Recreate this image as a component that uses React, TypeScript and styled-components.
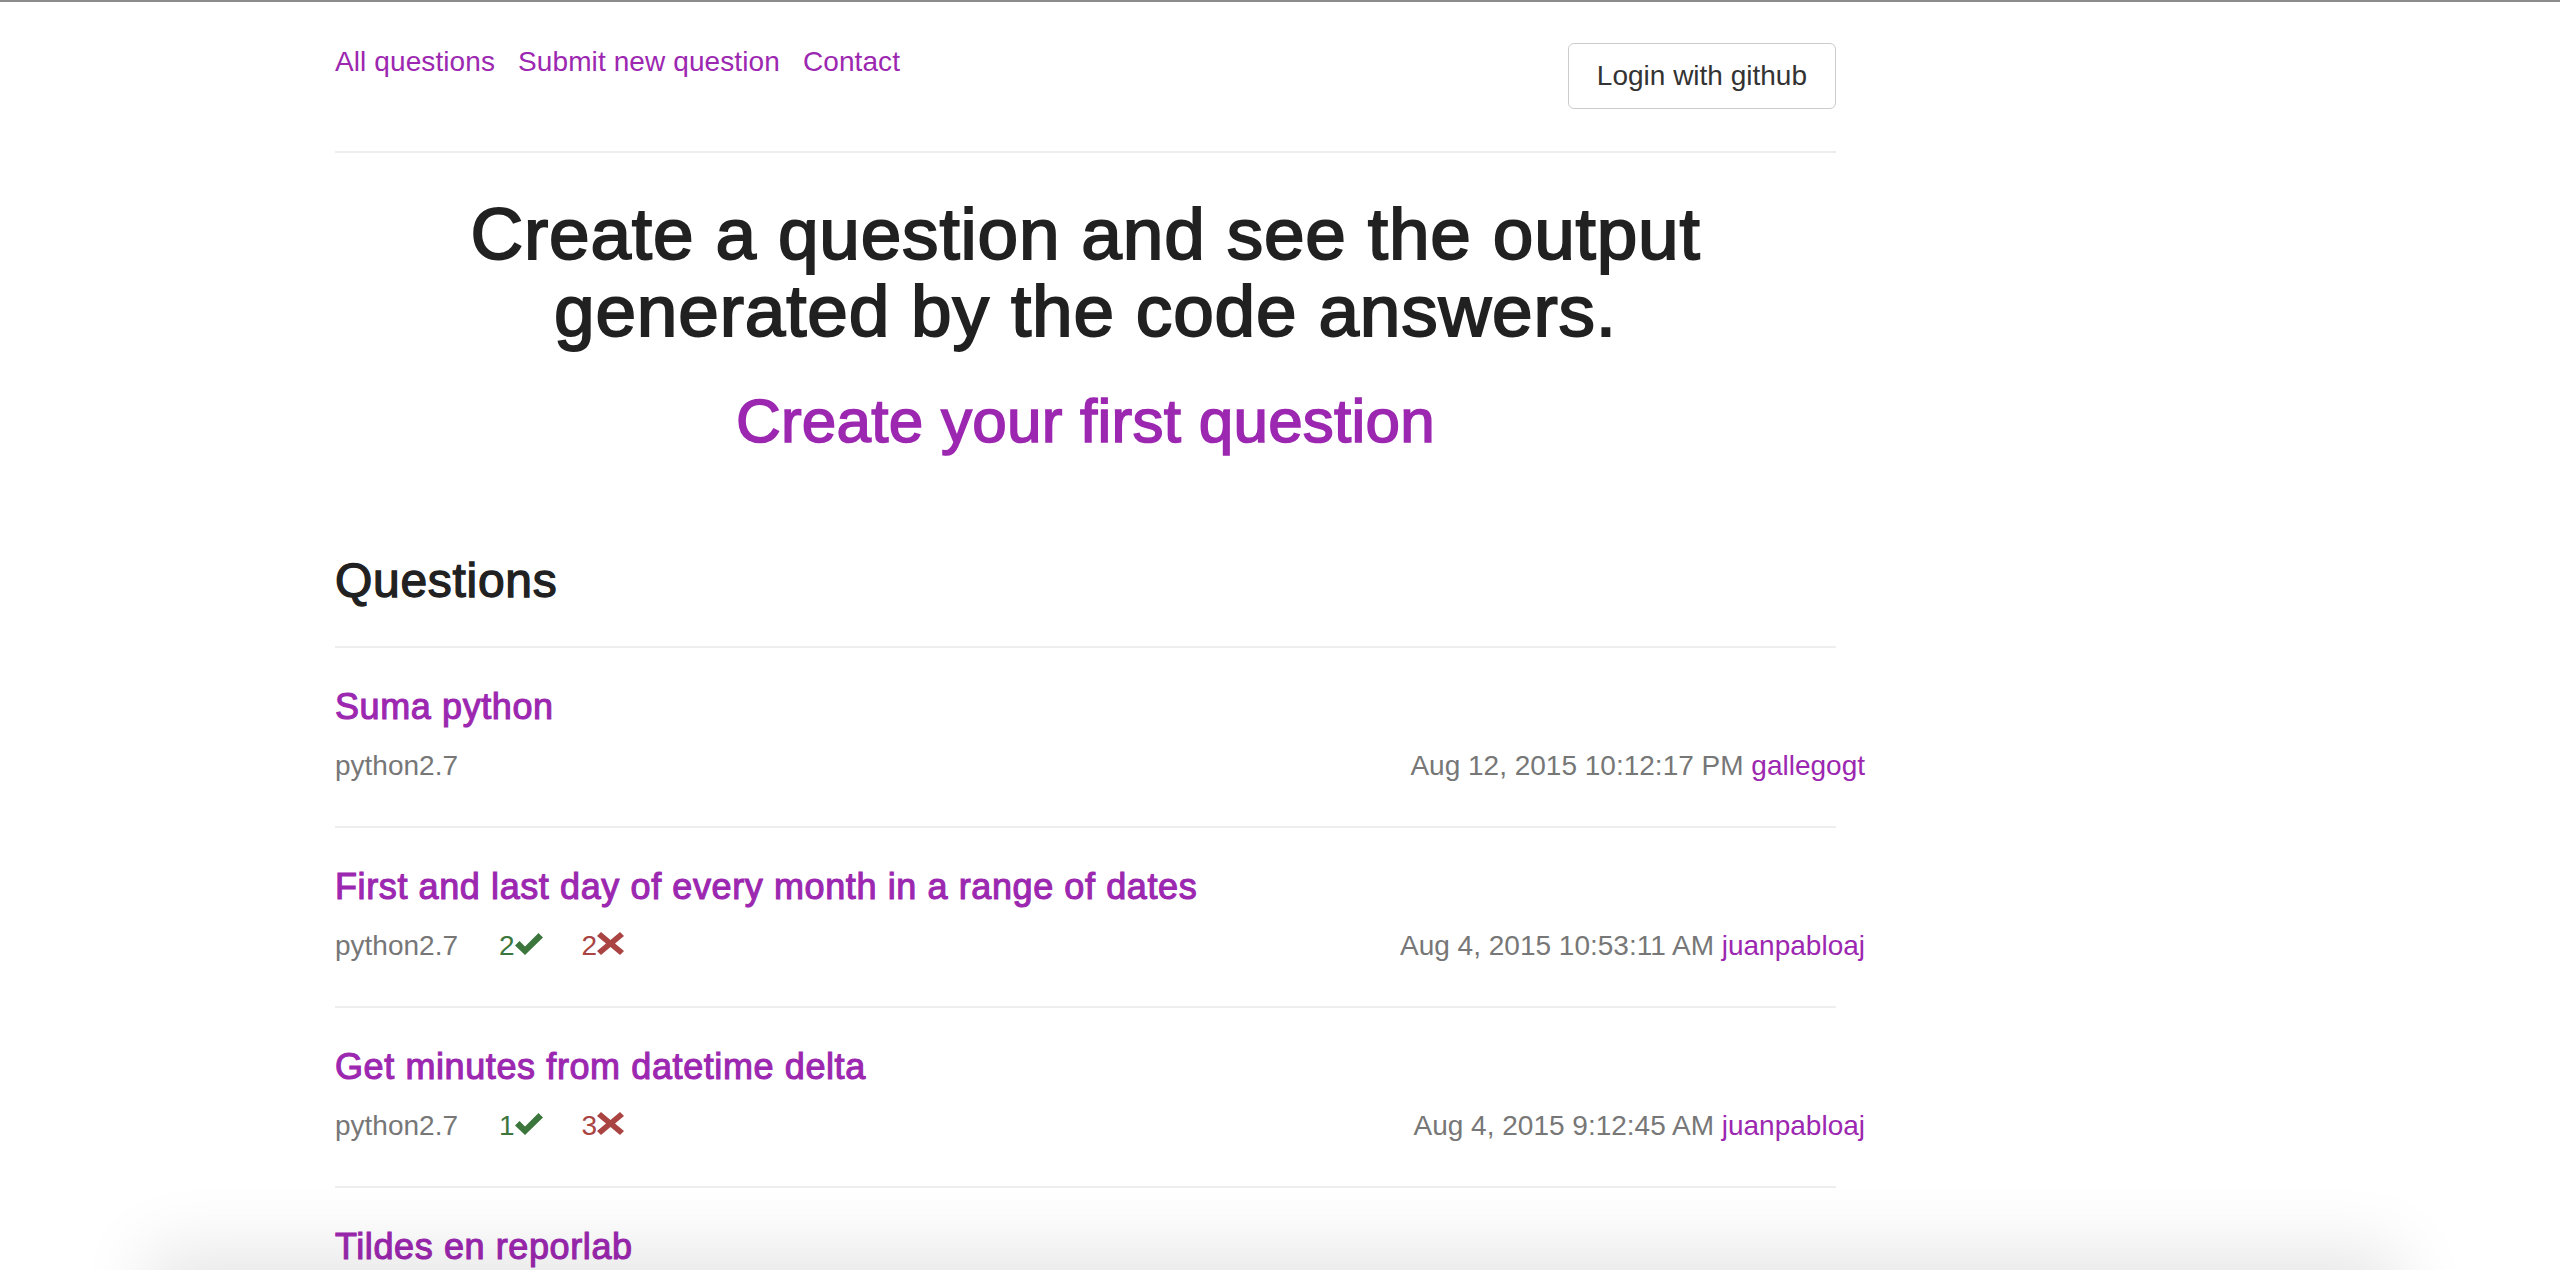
import React from "react";
import styled, { createGlobalStyle } from "styled-components";

const GlobalStyle = createGlobalStyle`
  html, body { margin: 0; padding: 0; background: #fff; }
  body {
    font-family: "Liberation Sans", Arial, Helvetica, sans-serif;
    color: #212121;
    border-top: 2px solid #8c8c8c;
  }
  a { text-decoration: none; }
`;

const purple = "#9c27b0";

const Page = styled.div`
  padding-left: 335px;
  padding-bottom: 120px;
`;

const Container = styled.div`
  width: 1501px;
`;

const Header = styled.header`
  display: flex;
  justify-content: space-between;
  align-items: flex-start;
  padding: 41px 0 42px;
  border-bottom: 2px solid #eee;
`;

const Nav = styled.nav`
  display: flex;
  gap: 23px;
  margin-top: 3px;
`;

const NavLink = styled.a`
  font-size: 28px;
  line-height: 32px;
  letter-spacing: 0.1px;
  color: ${purple};
`;

const LoginButton = styled.button`
  font-family: "Liberation Sans", Arial, sans-serif;
  font-size: 28px;
  line-height: 32px;
  color: #333;
  background: #fff;
  border: 1px solid #ccc;
  border-radius: 6px;
  padding: 16px 28px;
  cursor: pointer;
`;

const Hero = styled.section`
  text-align: center;
`;

const HeroTitle = styled.h1`
  margin: 42px 0 0;
  font-size: 73px;
  line-height: 77px;
  font-weight: 400;
  letter-spacing: 0.8px;
  -webkit-text-stroke: 1.9px #212121;
  color: #212121;
`;

const HeroLink = styled.a`
  display: block;
  margin-top: 37px;
  font-size: 62px;
  line-height: 70px;
  letter-spacing: 0.25px;
  color: ${purple};
  -webkit-text-stroke: 1.6px ${purple};
`;

const SectionTitle = styled.h2`
  margin: 97px 0 0;
  padding-bottom: 37px;
  border-bottom: 2px solid #eee;
  font-size: 48px;
  line-height: 56px;
  font-weight: 400;
  letter-spacing: 0.7px;
  -webkit-text-stroke: 1.3px #212121;
  color: #212121;
`;

const QuestionList = styled.ul`
  list-style: none;
  margin: 0;
  padding: 0;
`;

const QuestionItem = styled.li`
  padding: 38px 0 44px;
  border-bottom: 2px solid #eee;
`;

const QuestionTitle = styled.a`
  display: block;
  font-size: 36px;
  line-height: 42px;
  letter-spacing: 0.6px;
  color: ${purple};
  -webkit-text-stroke: 1.1px ${purple};
`;

const MetaRow = styled.div`
  display: flex;
  justify-content: space-between;
  align-items: baseline;
  margin-top: 22px;
  margin-right: -29px;
  font-size: 28px;
  line-height: 32px;
  color: #777;
`;

const MetaLeft = styled.div`
  display: flex;
  align-items: baseline;
`;

const Count = styled.span<{ $tone: "ok" | "bad" }>`
  display: inline-flex;
  align-items: baseline;
  margin-left: ${(p) => (p.$tone === "ok" ? "41px" : "39px")};
  color: ${(p) => (p.$tone === "ok" ? "#3c763d" : "#a94442")};
`;

const Author = styled.a`
  color: ${purple};
`;

const CheckIcon = () => (
  <svg width="28" height="22" viewBox="0 0 28 22" fill="#3c763d">
    <polygon points="0,12.5 4.5,8 10,13.5 23.5,0 28,4.5 10,22" />
  </svg>
);

const CrossIcon = () => (
  <svg width="27" height="23" viewBox="0 0 27 23" fill="#a94442">
    <polygon points="0,4 4,0 13.5,8 23,0 27,4 18,11.5 27,19 23,23 13.5,15 4,23 0,19 9,11.5" />
  </svg>
);

const BottomShade = styled.div`
  position: fixed;
  left: 167px;
  right: 180px;
  bottom: -110px;
  height: 110px;
  background: #fff;
  box-shadow: 0 0 70px 20px rgba(0, 0, 0, 0.1);
  pointer-events: none;
`;

type Q = {
  title: string;
  ok?: number;
  bad?: number;
  date?: string;
  author?: string;
};

const questions: Q[] = [
  { title: "Suma python", date: "Aug 12, 2015 10:12:17 PM", author: "gallegogt" },
  {
    title: "First and last day of every month in a range of dates",
    ok: 2,
    bad: 2,
    date: "Aug 4, 2015 10:53:11 AM",
    author: "juanpabloaj",
  },
  {
    title: "Get minutes from datetime delta",
    ok: 1,
    bad: 3,
    date: "Aug 4, 2015 9:12:45 AM",
    author: "juanpabloaj",
  },
  { title: "Tildes en reporlab" },
];

export default function App() {
  return (
    <>
      <GlobalStyle />
      <Page>
        <Container>
          <Header>
            <Nav>
              <NavLink href="#">All questions</NavLink>
              <NavLink href="#">Submit new question</NavLink>
              <NavLink href="#">Contact</NavLink>
            </Nav>
            <LoginButton>Login with github</LoginButton>
          </Header>

          <Hero>
            <HeroTitle>
              Create a question and see the output
              <br />
              generated by the code answers.
            </HeroTitle>
            <HeroLink href="#">Create your first question</HeroLink>
          </Hero>

          <SectionTitle>Questions</SectionTitle>
          <QuestionList>
            {questions.map((q) => (
              <QuestionItem key={q.title}>
                <QuestionTitle href="#">{q.title}</QuestionTitle>
                {q.date && (
                  <MetaRow>
                    <MetaLeft>
                      <span>python2.7</span>
                      {q.ok !== undefined && (
                        <Count $tone="ok">
                          {q.ok}
                          <CheckIcon />
                        </Count>
                      )}
                      {q.bad !== undefined && (
                        <Count $tone="bad">
                          {q.bad}
                          <CrossIcon />
                        </Count>
                      )}
                    </MetaLeft>
                    <span>
                      {q.date} <Author href="#">{q.author}</Author>
                    </span>
                  </MetaRow>
                )}
              </QuestionItem>
            ))}
          </QuestionList>
        </Container>
      </Page>
      <BottomShade />
    </>
  );
}
